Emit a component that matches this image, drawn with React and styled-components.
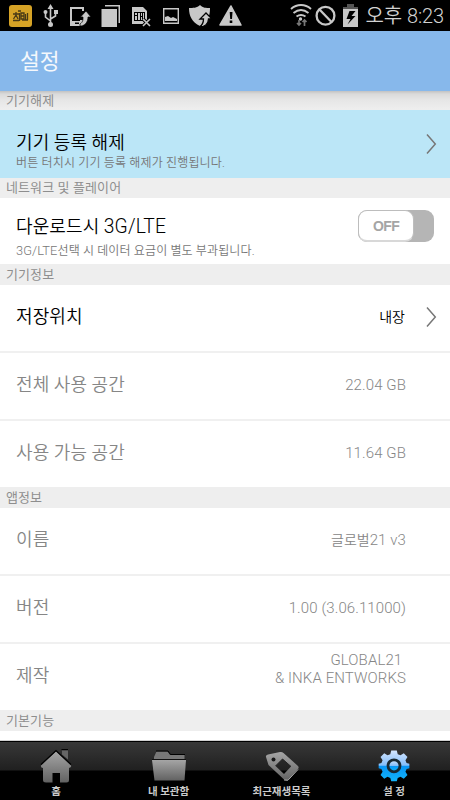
import React from "react";
import styled, { createGlobalStyle, css } from "styled-components";

const GlobalStyle = createGlobalStyle`
  * { box-sizing: border-box; }
  body { margin: 0; background: #fff; }
`;

const Screen = styled.div`
  width: 450px;
  height: 800px;
  overflow: hidden;
  display: flex;
  flex-direction: column;
  background: #fff;
  color: #000;
  font-family: Roboto, "Noto Sans CJK KR", sans-serif;
  white-space: nowrap;
`;

const StatusBar = styled.header`
  flex: none;
  height: 31px;
  background: #000;
  display: flex;
  justify-content: space-between;
`;

const StatusIcons = styled.svg`
  display: block;
  flex: none;
`;

const StatusRight = styled.div`
  display: flex;
  padding-right: 6px;
`;

const Clock = styled.span`
  color: #d2d2d2;
  font-size: 20px;
  line-height: 32px;
  font-weight: 350;
  letter-spacing: -0.1px;
`;

const TitleBar = styled.div`
  flex: none;
  height: 60px;
  padding-left: 20px;
  background: #87b8eb;
  color: #f5f8fc;
  font-size: 21.5px;
  line-height: 62px;
`;

const SectionTitle = styled.h2`
  flex: none;
  margin: 0;
  height: ${(p) => p.$height || 21}px;
  padding-left: 6px;
  background: ${(p) =>
    p.$shadow ? "linear-gradient(#c2c2c2 0, #dadada 3px, #e6e6e6 9px, #eee 18px)" : "#eee"};
  color: #8e8e8e;
  font-size: 13px;
  font-weight: 400;
  letter-spacing: 0.1px;
  line-height: ${(p) => p.$height || 21}px;
`;

const Row = styled.div`
  flex: none;
  height: ${(p) => p.$height || 68}px;
  padding: 0 13px ${(p) => p.$lift || 0}px 16px;
  display: flex;
  align-items: center;
  justify-content: space-between;
  color: ${(p) => (p.$muted ? "#868686" : "#000")};
  ${(p) => p.$active && css`background: #bbe6f7;`}
  ${(p) => p.$line && css`border-bottom: 2px solid #f0f0f0;`}
`;

const Texts = styled.div`
  display: flex;
  flex-direction: column;
  gap: ${(p) => p.$gap || 0}px;
  padding-top: ${(p) => p.$top || 0}px;
`;

const RowTitle = styled.span`
  font-size: 18px;
  line-height: 24px;
  font-weight: 350;
  letter-spacing: 0.1px;
`;

const RowNote = styled.span`
  color: #777;
  font-size: 12px;
  line-height: 17px;
  font-weight: 350;
  letter-spacing: ${(p) => p.$spacing || 0}px;
`;

const Latin = styled.span`
  font-size: ${(p) => p.$size || 15}px;
  line-height: 1;
  letter-spacing: 0.1px;
`;

const RowEnd = styled.div`
  display: flex;
  align-items: center;
  gap: 21px;
`;

const RowValue = styled.span`
  display: block;
  margin-right: ${(p) => (p.$inset ? 31 : 0)}px;
  margin-top: ${(p) => (p.$raised ? -14 : 0)}px;
  font-size: 14px;
  line-height: 18px;
  font-weight: 350;
  text-align: right;
  white-space: pre-line;
`;

const Switch = styled.div`
  width: 76px;
  height: 32px;
  margin: -11px 3px 0 0;
  border-radius: 9px;
  background: #b5b5b5;
`;

const SwitchKnob = styled.div`
  width: 56px;
  height: 32px;
  border: 1px solid #bdbdbd;
  border-bottom: 2px solid #d8d8d8;
  border-radius: 9px;
  background: #fff;
  color: #a5a5a5;
  font: bold 14px/31px "Liberation Sans", sans-serif;
  letter-spacing: -0.6px;
  text-align: center;
`;

const Filler = styled.div`
  flex: 1;
  border-bottom: 1px solid #d0d0d0;
`;

const TabBar = styled.nav`
  flex: none;
  height: 59px;
  display: grid;
  grid-template-columns: 112px 113px 113px 112px;
  border-top: 1px solid #000;
  background: linear-gradient(#383838 0, #202020 28px, #000 29px);
`;

const Tab = styled.div`
  display: flex;
  flex-direction: column;
  align-items: center;
  padding-top: 4px;
`;

const TabLabel = styled.span`
  color: #ccc;
  font-size: 10.5px;
  font-weight: 700;
  line-height: 15px;
`;

const Chevron = () => (
  <svg width="11" height="22" viewBox="0 0 11 22" fill="none">
    <path d="M1 1.5 9.3 11 1 20.5" stroke="#777" strokeWidth="1.5" />
  </svg>
);

const LeftStatusIcons = () => (
  <StatusIcons width="245" height="31" viewBox="0 0 245 31" fill="#c8c8c8">
    <rect x="9" y="5" width="23" height="22" rx="3" fill="#d6a326" />
    <g stroke="#493a16" strokeWidth="1.3" fill="none">
      <path d="M13 14h6M16 12v3M13.500 19l2.500-4 2 4M19.500 13v8M21 13v6h3v-6zM27.500 13v7M13 20.500h6" />
      <path d="M21 16h3M18 11h3M22 20h6M25.500 14v6" />
    </g>
    <g stroke="#c8c8c8" strokeWidth="1.6" fill="none">
      <path d="M50.500 7v18M50.500 21l-5-4v-4M50.500 19l5-3v-4" />
    </g>
    <path d="m50.500 4 3 5h-6zM54 10h4v4h-4z" />
    <circle cx="45.500" cy="12" r="2" />
    <circle cx="50.500" cy="24.500" r="2.500" />
    <path d="M70 7h14v4h-2V9H72v12h8v-1h3v6H70zM75 22.500V24h4v-1.500z" fillRule="evenodd" />
    <path d="m86 11 5 6h-3c0 5-3 9-8 9v-2c3-2 3-4 3-7h-2.500z" stroke="#000" strokeWidth=".7" />
    <path d="M105 5h15v18h-1.500V6.500H105z" />
    <path d="M101.500 9h15.500v18h-15.500z" />
    <path fillRule="evenodd" d="M132 7h11l4 4v13h-15zM134 12v9h11v-9z" />
    <path d="M135 13h2v2h-2zm0 3h2v4h-2zm3-3h2v7h-2zm3 0h1v3h-1zm2 0h1v7h-1zm-2 4h1v3h-1z" />
    <path d="m143 19 7 7m0-7-7 7" stroke="#000" strokeWidth="3.500" />
    <path d="m143 19 7 7m0-7-7 7" stroke="#c8c8c8" strokeWidth="1.600" />
    <path d="M163.700 8.700h14.600v14.600h-14.600z" fill="none" stroke="#c8c8c8" strokeWidth="1.400" />
    <path d="M165 21v-4l3-1 3 2 2-1 4 2v2z" />
    <path d="M200 5c3 3 6 3 10 3 0 8-2 14-10 18-8-4-11-10-11-18 4 0 8 0 11-3z" />
    <path d="m206 13 6 6h-3.500c0 5-4 8-9 8 3-2 4-4 4-8H200z" stroke="#000" strokeWidth="1.300" />
    <path d="M231 6 241 25h-21z" stroke="#c8c8c8" strokeWidth="1.500" strokeLinejoin="round" />
    <path d="M229.700 12h2.800l-.5 7h-1.800zM229.700 20.500h2.600V23h-2.600z" fill="#000" />
  </StatusIcons>
);

const RightStatusIcons = () => (
  <StatusIcons width="76" height="31" viewBox="289 0 76 31" fill="none">
    <g stroke="#c8c8c8" strokeWidth="1.900">
      <path d="M290 9c6-5.300 14-5.300 20 0M292.500 13c5-4 10-4 15 0M295.500 16.500c3-2 6-2 9 0" />
    </g>
    <circle cx="299.500" cy="19" r="1.700" fill="#c8c8c8" />
    <path d="M298 20v5m-2-2 2 2 2-2M303.500 26v-6m-2 2 2-2 2 2" stroke="#777" strokeWidth="1.700" />
    <circle cx="324.500" cy="15.700" r="8.900" stroke="#c8c8c8" strokeWidth="2.300" />
    <path d="m318.500 9.500 12 12.500" stroke="#c8c8c8" strokeWidth="2.300" />
    <path d="M346 4h7v3h4v4h-15V7h4z" fill="#555" />
    <path d="M342 9h15v18h-15z" fill="#c8c8c8" />
    <path d="m348.500 11-3 8h4l-3 5.500 8-8.500h-4l4-5z" fill="#000" />
  </StatusIcons>
);

const HomeIcon = () => (
  <svg width="34" height="38" viewBox="0 0 34 38">
    <defs>
      <linearGradient id="silver" x1="0" y1="0" x2="0" y2="1">
        <stop stopColor="#a5a5a5" />
        <stop offset="1" stopColor="#626262" />
      </linearGradient>
    </defs>
    <path d="M23 4.500h6v9l-6-5z" fill="#666" />
    <path d="M22.500 3.500H29" stroke="#000" />
    <path
      d="M17 5.500 32 19.500q.8 2-2 2.500v12q0 2.500-2.500 2.500H21V27h-7.500v9.500H7Q4 36.500 4 34V22q-2.500-.5-2-2.500z"
      fill="url(#silver)"
    />
    <path d="M2 18.500 17 4.500l15 14" fill="none" stroke="#000" strokeWidth="1.200" />
  </svg>
);

const FolderIcon = () => (
  <svg width="36" height="38" viewBox="0 0 36 38">
    <path d="M3 11 5.500 5.500h11L19 9h14.500v4H3z" fill="#777" />
    <path d="M5 5h12l2.500 3.500H34" fill="none" stroke="#000" />
    <path d="M1 14h34l-1.500 20.500h-30z" fill="url(#silver)" />
    <path d="M1 13.500h34" stroke="#111" />
  </svg>
);

const TagIcon = () => (
  <svg width="36" height="38" viewBox="0 0 36 38">
    <path
      fillRule="evenodd"
      d="M4 8.500 16 6q2-.4 3.500 1L34 20q1.500 2-.5 3.500L24 34q-2 1.500-4-.5L4.500 19 2 11q-.5-2 2-2.500ZM11.500 20 20 28 27 20.500 18.500 13Z"
      fill="url(#silver)"
    />
    <circle cx="9.500" cy="13.500" r="2" fill="#171717" />
    <path d="m11.500 20 7-7 8.500 7.500" stroke="#222" fill="none" />
    <path d="m20 34 4 .2L34 23.500" stroke="#aaa" fill="none" />
  </svg>
);

const GearIcon = () => (
  <svg width="34" height="38" viewBox="0 0 34 38">
    <defs>
      <linearGradient id="blue" x1="0" y1="0" x2="0" y2="1">
        <stop stopColor="#d4e6ff" />
        <stop offset=".48" stopColor="#85bdf8" />
        <stop offset=".52" stopColor="#0795f5" />
        <stop offset="1" stopColor="#12b4fa" />
      </linearGradient>
    </defs>
    <path
      transform="translate(1.200 -.2) scale(.93)"
      d="M14 5h6l1 4 3 1.200 3.500-2.200 4 4-2.200 3.500 1.200 3 3 .7v5l-3 .8-1.200 3 2.200 3.500-4 4-3.500-2.200-3 1.200-1 3.500h-6l-1-3.500-3-1.200-3.500 2.200-4-4 2.200-3.500-1.200-3-3-.8v-5l3-.7 1.200-3L2.500 12l4-4 3.500 2.200 3-1.200z"
      fill="url(#blue)"
    />
    <circle cx="17" cy="19.800" r="6" fill="url(#blue)" stroke="#182832" strokeWidth="2.800" />
  </svg>
);

const storage = [
  { title: "전체 사용 공간", value: "22.04 GB", line: true },
  { title: "사용 가능 공간", value: "11.64 GB", height: 66 },
];

const appInfo = [
  { title: "이름", prefix: "글로벌", value: "21 v3", line: true },
  { title: "버전", value: "1.00 (3.06.11000)", line: true },
  { title: "제작", value: "GLOBAL21\u00a0\n& INKA ENTWORKS", height: 66, raised: true },
];

const InfoRow = ({ title, prefix, value, line, height, raised }) => (
  <Row $muted $line={line} $height={height} $lift={2}>
    <RowTitle>{title}</RowTitle>
    <RowValue $inset $raised={raised}>
      {prefix}
      <Latin>{value}</Latin>
    </RowValue>
  </Row>
);

export default function App() {
  return (
    <Screen>
      <GlobalStyle />
      <StatusBar>
        <LeftStatusIcons />
        <StatusRight>
          <RightStatusIcons />
          <Clock>오후 8:23</Clock>
        </StatusRight>
      </StatusBar>
      <TitleBar>설정</TitleBar>

      <SectionTitle $shadow $height={19}>기기해제</SectionTitle>
      <Row $active>
        <Texts $top={15} $gap={0}>
          <RowTitle>기기 등록 해제</RowTitle>
          <RowNote $spacing={0.17}>버튼 터치시 기기 등록 해제가 진행됩니다.</RowNote>
        </Texts>
        <Chevron />
      </Row>

      <SectionTitle $height={20}>네트워크 및 플레이어</SectionTitle>
      <Row $height={66}>
        <Texts $top={12} $gap={4}>
          <RowTitle>
            다운로드시 <Latin $size={19.3}>3G/LTE</Latin>
          </RowTitle>
          <RowNote $spacing={0.14}>
            <Latin $size={12.8}>3G/LTE</Latin>선택 시 데이터 요금이 별도 부과됩니다.
          </RowNote>
        </Texts>
        <Switch>
          <SwitchKnob>OFF</SwitchKnob>
        </Switch>
      </Row>

      <SectionTitle>기기정보</SectionTitle>
      <Row $line $lift={2}>
        <RowTitle>저장위치</RowTitle>
        <RowEnd>
          <RowValue>내장</RowValue>
          <Chevron />
        </RowEnd>
      </Row>
      {storage.map((item) => (
        <InfoRow key={item.title} {...item} />
      ))}

      <SectionTitle>앱정보</SectionTitle>
      {appInfo.map((item) => (
        <InfoRow key={item.title} {...item} />
      ))}

      <SectionTitle>기본기능</SectionTitle>
      <Filler />

      <TabBar>
        <Tab>
          <HomeIcon />
          <TabLabel>홈</TabLabel>
        </Tab>
        <Tab>
          <FolderIcon />
          <TabLabel>내 보관함</TabLabel>
        </Tab>
        <Tab>
          <TagIcon />
          <TabLabel>최근재생목록</TabLabel>
        </Tab>
        <Tab>
          <GearIcon />
          <TabLabel>설 정</TabLabel>
        </Tab>
      </TabBar>
    </Screen>
  );
}
